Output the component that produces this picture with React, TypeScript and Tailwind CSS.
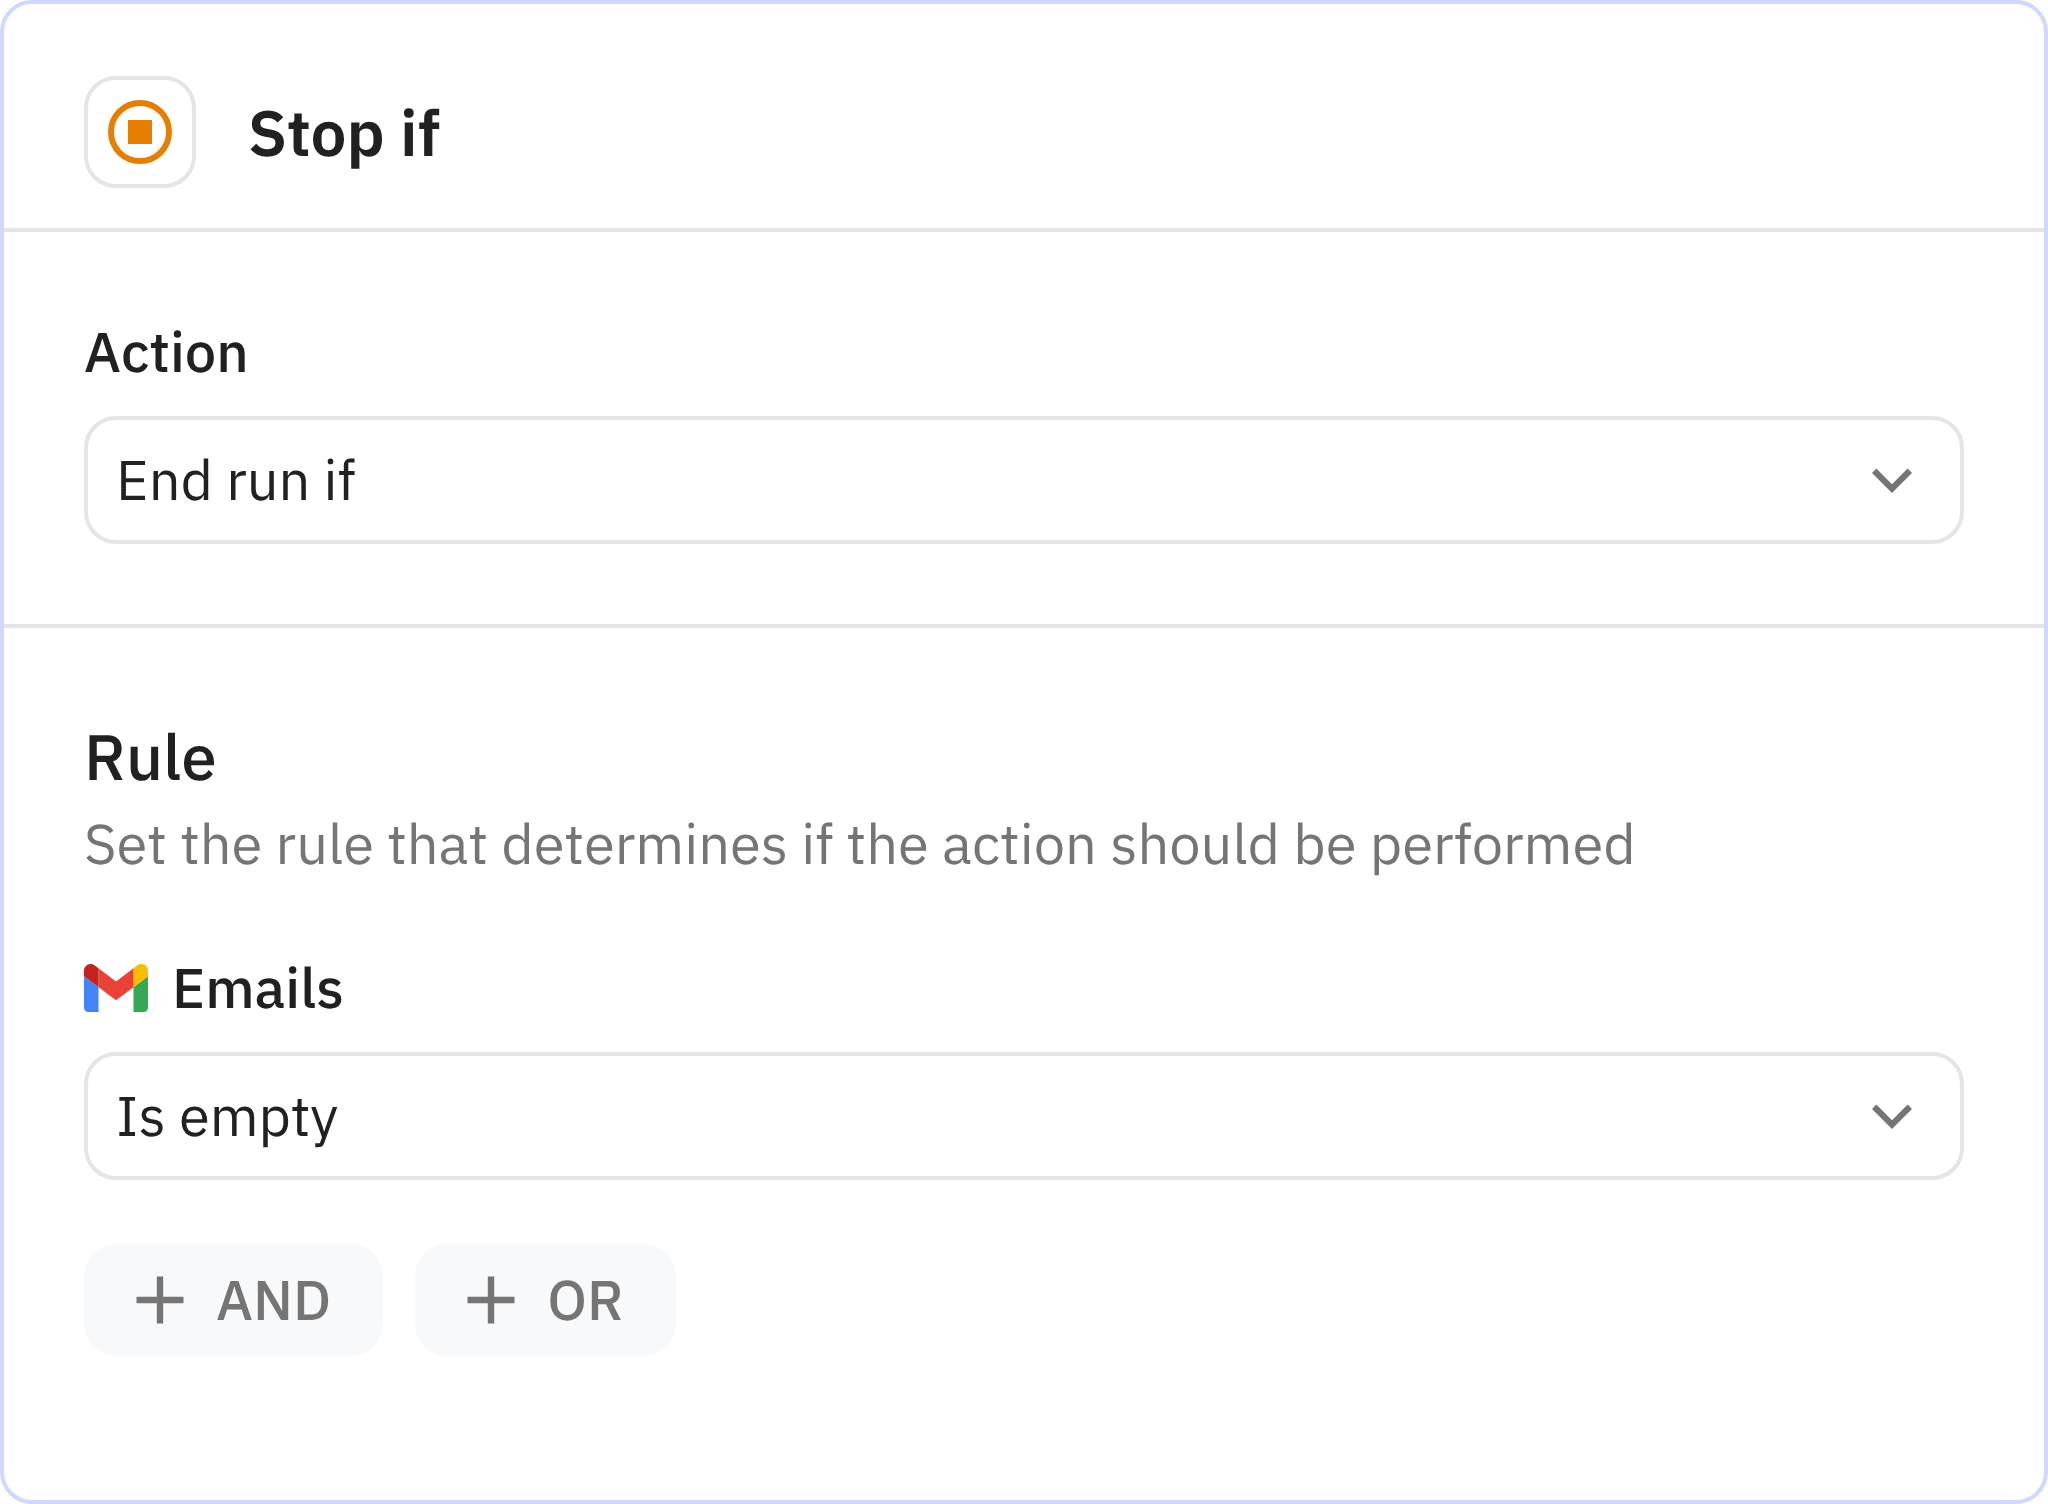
import { useState } from "react";
import type { ReactNode } from "react";

interface SelectFieldProps {
  id: string;
  label: string;
  icon?: ReactNode;
  options: string[];
}

function StopIcon() {
  return (
    <svg viewBox="0 0 64 64" className="size-16" aria-hidden="true">
      <circle cx="32" cy="32" r="29" fill="none" stroke="#e67e00" strokeWidth="6" />
      <rect x="20" y="20" width="24" height="24" fill="#e67e00" />
    </svg>
  );
}

function GmailIcon() {
  return (
    <svg viewBox="52 42 88 66" className="h-12 w-16" aria-hidden="true">
      <path fill="#4285f4" d="M58 108h14V74L52 59v43c0 3.32 2.69 6 6 6" />
      <path fill="#34a853" d="M120 108h14c3.32 0 6-2.69 6-6V59l-20 15" />
      <path fill="#fbbc04" d="M120 48v26l20-15v-8c0-7.42-8.47-11.65-14.4-7.2" />
      <path fill="#ea4335" d="M72 74V48l24 18 24-18v26L96 92" />
      <path fill="#c5221f" d="M52 51v8l20 15V48l-5.6-4.2c-5.94-4.45-14.4-.22-14.4 7.2" />
    </svg>
  );
}

function PlusIcon() {
  return (
    <svg viewBox="0 0 64 64" className="size-16" aria-hidden="true">
      <path d="M32 8.5v47M8.5 32h47" stroke="currentColor" strokeWidth="6.4" />
    </svg>
  );
}

function SelectField({ id, label, icon, options }: SelectFieldProps) {
  const [value, setValue] = useState(options[0]);

  return (
    <div className="flex flex-col gap-6">
      <div className="flex items-center gap-6">
        {icon}
        <label htmlFor={id} className="text-[56px] leading-20 font-medium">
          {label}
        </label>
      </div>
      <div className="relative">
        <select
          id={id}
          value={value}
          onChange={(e) => setValue(e.target.value)}
          className="h-32 w-full appearance-none rounded-4xl border-4 border-[#e5e5e5] bg-white pr-28 pl-7 text-[56px] leading-20 [text-rendering:geometricPrecision]"
        >
          {options.map((option) => (
            <option key={option}>{option}</option>
          ))}
        </select>
        <svg
          viewBox="0 0 64 64"
          className="pointer-events-none absolute top-8 right-10 size-16 text-[#757575]"
          aria-hidden="true"
        >
          <path
            d="M14.2 22.8L32 40.6L49.8 22.8"
            fill="none"
            stroke="currentColor"
            strokeWidth="6.2"
          />
        </svg>
      </div>
    </div>
  );
}

function AddButton({ children }: { children: ReactNode }) {
  return (
    <button
      type="button"
      className="flex h-28 items-center gap-6 rounded-4xl bg-[#f8f9fb] pr-13 pl-11 text-[56px] leading-20 font-medium text-[#757575] [text-rendering:geometricPrecision]"
    >
      <PlusIcon />
      {children}
    </button>
  );
}

export default function App() {
  return (
    <main className="flex min-h-screen flex-col rounded-4xl border-4 border-[#d0d8ff] bg-white font-['IBM_Plex_Sans',Roboto,sans-serif] text-[#212121] [text-rendering:geometricPrecision]">
      <header className="flex items-center gap-13 border-b-4 border-[#e5e5e5] px-20 pt-18 pb-10">
        <div className="flex size-28 items-center justify-center rounded-4xl border-4 border-[#e5e5e5]">
          <StopIcon />
        </div>
        <h1 className="text-[64px] leading-24 font-semibold">Stop if</h1>
      </header>

      <section className="border-b-4 border-[#e5e5e5] p-20">
        <SelectField id="action" label="Action" options={["End run if", "Continue if"]} />
      </section>

      <section className="flex flex-col gap-16 p-20">
        <div>
          <h2 className="text-[64px] leading-24 font-medium">Rule</h2>
          <p className="text-[56px] leading-20 text-[#757575]">
            Set the rule that determines if the action should be performed
          </p>
        </div>
        <SelectField
          id="emails"
          label="Emails"
          icon={<GmailIcon />}
          options={["Is empty", "Is not empty"]}
        />
        <div className="flex gap-8">
          <AddButton>AND</AddButton>
          <AddButton>OR</AddButton>
        </div>
      </section>
    </main>
  );
}
